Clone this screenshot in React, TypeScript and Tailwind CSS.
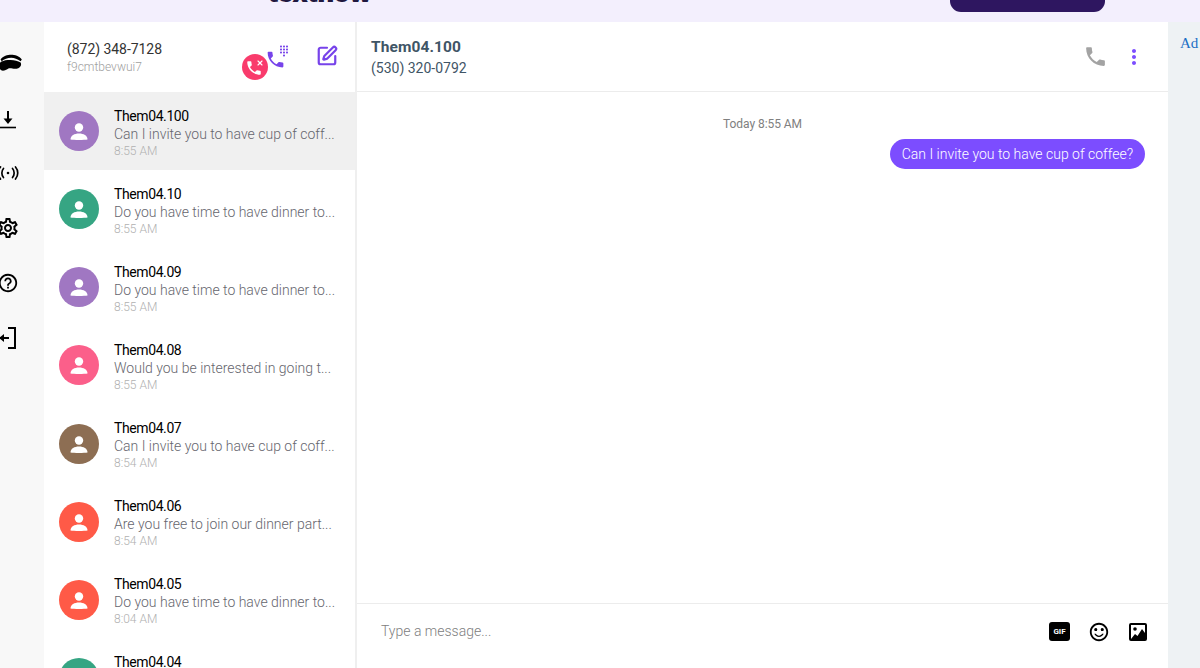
import { SquarePen, X } from 'lucide-react'
import {
  MdPhone,
  MdMoreVert,
  MdOutlineSettings,
  MdHelpOutline,
  MdDialpad,
  MdSentimentSatisfiedAlt,
} from 'react-icons/md'

const threads = [
  { name: 'Them04.100', text: 'Can I invite you to have cup of coff...', time: '8:55 AM', color: 'bg-[#a077c2]', active: true },
  { name: 'Them04.10', text: 'Do you have time to have dinner to...', time: '8:55 AM', color: 'bg-[#36a583]' },
  { name: 'Them04.09', text: 'Do you have time to have dinner to...', time: '8:55 AM', color: 'bg-[#a077c2]' },
  { name: 'Them04.08', text: 'Would you be interested in going t...', time: '8:55 AM', color: 'bg-[#fb5f8a]' },
  { name: 'Them04.07', text: 'Can I invite you to have cup of coff...', time: '8:54 AM', color: 'bg-[#8d6e53]' },
  { name: 'Them04.06', text: 'Are you free to join our dinner part...', time: '8:54 AM', color: 'bg-[#ff5a47]' },
  { name: 'Them04.05', text: 'Do you have time to have dinner to...', time: '8:04 AM', color: 'bg-[#ff5a47]' },
  { name: 'Them04.04', text: 'Do you have time to have dinner to...', time: '8:04 AM', color: 'bg-[#36a583]' },
]

function Rail() {
  return (
    <div className="w-[44px] shrink-0 bg-[#f8f8f8] text-black flex flex-col pt-[30px] gap-[33px] overflow-hidden">
      {/* logo, cut by the window edge */}
      <svg viewBox="0 0 22 22" className="w-[26px] h-[26px] -ml-[3px] -my-[2px] shrink-0" fill="currentColor">
        <path d="M3 8c2-3 6-4 9-4 3 0 7 1 9 4l-1 1.500c-3-2-5-3-8-3-3 0-6 1-8 3z" />
        <path d="M1 13c1-3 4-4 8-4.500 5-.5 8 .5 11 2 1 2 0 4-2 5-3 1-5 0-7 0-2 0-3 2-6 2-2 0-3-2-4-4.500z" />
      </svg>
      <svg viewBox="0 0 22 22" className="w-[22px] h-[22px] -ml-[2px] mt-[1px] shrink-0" fill="none" stroke="currentColor">
        <path d="M10 3v11" strokeWidth="2" />
        <path d="M5.500 10.500h9L10 16z" fill="currentColor" stroke="none" />
        <path d="M2 19.500h16" strokeWidth="1.600" />
      </svg>
      <svg viewBox="0 0 22 22" className="w-[22px] h-[22px] -ml-[3px] -mt-[1px] shrink-0" fill="none" stroke="currentColor" strokeWidth="1.700" strokeLinecap="round">
        <circle cx="11" cy="11" r="1.300" fill="currentColor" stroke="none" />
        <path d="M6.500 6.500c-2.200 2.500-2.200 6.500 0 9" />
        <path d="M15.500 6.500c2.200 2.500 2.200 6.500 0 9" />
        <path d="M3.500 5c-3 3.500-3 8.500 0 12" />
        <path d="M18.500 5c3 3.500 3 8.500 0 12" />
      </svg>
      <MdOutlineSettings className="w-[24px] h-[24px] -ml-[4px] -my-[1px] shrink-0" />
      <MdHelpOutline className="w-[22px] h-[22px] -ml-[3px] shrink-0" />
      <svg viewBox="0 0 22 22" className="w-[22px] h-[22px] -ml-[3px] shrink-0" fill="none" stroke="currentColor" strokeWidth="2">
        <path d="M11 1h7v20h-7" />
        <path d="M3 11h9" />
        <path d="M7 7l-5 4 5 4" fill="currentColor" stroke="none" />
      </svg>
    </div>
  )
}

function Avatar({ color }: { color: string }) {
  return (
    <div className={`w-[40px] h-[40px] rounded-full flex items-center justify-center shrink-0 ${color}`}>
      <svg viewBox="0 0 24 24" className="w-[24px] h-[24px]" fill="#fff">
        <circle cx="12" cy="8.500" r="4.200" />
        <path d="M3.500 20.500c0-4 4-6 8.500-6s8.500 2 8.500 6c-3 .6-14 .6-17 0z" />
      </svg>
    </div>
  )
}

function ThreadRow({ name, text, time, color, active }: { name: string; text: string; time: string; color: string; active?: boolean }) {
  return (
    <div className={`h-[78.14px] shrink-0 flex items-center pl-[15px] ${active ? 'bg-[#f0f0f0]' : 'bg-white'}`}>
      <Avatar color={color} />
      <div className="ml-[15px] min-w-0 pt-[3px]">
        <div className="text-[14px] leading-[18px] text-black tracking-[-0.4px]">{name}</div>
        <div className="text-[14px] leading-[18px] text-[#66666e] font-light whitespace-nowrap">{text}</div>
        <div className="text-[12px] leading-[16px] text-[#b0b0b0] font-light">{time}</div>
      </div>
    </div>
  )
}

export default function App() {
  return (
    <div className="w-[1200px] h-[668px] overflow-hidden flex flex-col bg-white font-['Roboto',sans-serif]">
      {/* Top banner, cut by the window */}
      <div className="h-[22px] shrink-0 bg-[#f3effd] flex overflow-hidden pl-[268px]">
        <div className="-mt-[20px] h-[26px] text-[26px] leading-[26px] font-black text-[#1f1740] font-['Inter',sans-serif] tracking-tight">textflow</div>
        <div className="ml-auto mr-[95px] -mt-[10px] w-[155px] h-[22px] rounded-[14px] bg-[#2e1660]" />
      </div>

      <div className="flex-1 flex min-h-0">
        <Rail />

        {/* Thread list */}
        <div className="w-[313px] shrink-0 flex flex-col border-r-2 border-[#efefef] overflow-hidden">
          <div className="h-[70px] shrink-0 flex items-start pl-[23px] relative">
            <div className="pt-[18px]">
              <div className="text-[14px] leading-[18px] text-[#333] tracking-[-0.05px]">(872) 348-7128</div>
              <div className="text-[12px] leading-[16px] text-[#a0a0a0] font-light mt-[1px]">f9cmtbevwui7</div>
            </div>
            <div className="absolute left-[198px] top-[32px] w-[26px] h-[26px] rounded-full bg-[#f93b6c] flex items-center justify-center text-white">
              <MdPhone className="w-[18px] h-[18px] -ml-[2px] mt-[2px]" />
              <X className="absolute right-[4px] top-[5px] w-[8px] h-[8px]" strokeWidth={3.500} />
            </div>
            <div className="absolute left-[221px] top-[24px] text-[#7743ea]">
              <MdPhone className="w-[21px] h-[21px] mt-[3px]" />
              <MdDialpad className="absolute left-[13px] -top-[1px] w-[12px] h-[12px]" />
            </div>
            <SquarePen className="absolute left-[272px] top-[23px] w-[22px] h-[22px] text-[#7743ea]" strokeWidth={2.400} />
          </div>
          {threads.map((t) => (
            <ThreadRow key={t.name} {...t} />
          ))}
        </div>

        {/* Conversation */}
        <div className="flex-1 flex flex-col min-w-0">
          <div className="h-[70px] shrink-0 border-b border-[#ececec] flex items-center pl-[14px] pr-[22px]">
            <div className="pt-[3px]">
              <div className="text-[15.500px] leading-[20px] font-bold text-[#3f5566] tracking-[0.1px]">Them04.100</div>
              <div className="text-[14px] leading-[22px] text-[#3f5566]">(530) 320-0792</div>
            </div>
            <MdPhone className="ml-auto w-[25px] h-[25px] text-[#a3a3a3]" />
            <MdMoreVert className="ml-[14px] w-[24px] h-[24px] text-[#7c4dff]" />
          </div>

          <div className="flex-1 flex flex-col px-[23px] pt-[24px]">
            <div className="text-center text-[12px] leading-[16px] text-[#808080] tracking-[-0.05px]">Today 8:55 AM</div>
            <div className="self-end mt-[7px] h-[30px] flex items-center rounded-full bg-[#7c4dff] px-[12px] pt-[1px] text-[14px] font-light text-white">
              Can I invite you to have cup of coffee?
            </div>
          </div>

          <div className="h-[65px] shrink-0 border-t border-[#ececec] flex items-center pl-[24px] pr-[21px] pb-[9px]">
            <div className="text-[14px] text-[#808080] font-light">Type a message...</div>
            <div className="ml-auto w-[21px] h-[19px] rounded-[3px] bg-black text-white text-[8px] font-bold flex items-center justify-center">GIF</div>
            <MdSentimentSatisfiedAlt className="ml-[18px] w-[22px] h-[22px] text-black" />
            <svg viewBox="0 0 18 18" className="ml-[19px] w-[18px] h-[18px]">
              <rect x="1" y="1" width="16" height="16" rx="1" fill="#fff" stroke="#000" strokeWidth="2" />
              <circle cx="6" cy="6" r="1.800" fill="#000" />
              <path d="M2 16l4-5 2.500 2L13 6l3 4v6z" fill="#000" />
            </svg>
          </div>
        </div>

        {/* Ad gutter */}
        <div className="w-[32px] shrink-0 bg-[#eef2f4] pl-[12px] pt-[9px] overflow-hidden">
          <span className="text-[15px] leading-[16px] text-[#1a6fc4] font-['Liberation_Serif',serif]">Ad</span>
        </div>
      </div>
    </div>
  )
}
